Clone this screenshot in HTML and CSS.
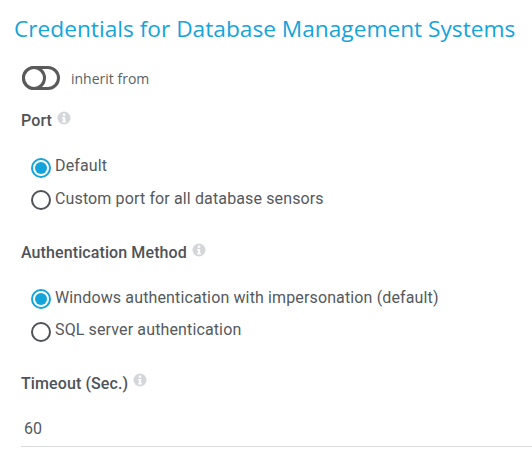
FILE: index.html
```html
<!DOCTYPE html>
<html lang="en">
<head>
<meta charset="utf-8">
<title>Credentials</title>
<link rel="stylesheet" href="styles.css">
</head>
<body>
<h1 class="title">Credentials for Database Management Systems</h1>
<div class="inherit">
  <span class="toggle"><span class="knob"></span></span>
  <span class="inherit-label">inherit from</span>
</div>
<section class="group group-port">
  <div class="label">Port <svg class="info" viewBox="0 0 14 14"><circle cx="7" cy="7" r="6.5" fill="#d4d7da"/><rect x="5.8" y="2.6" width="2.4" height="2.2" fill="#fff"/><path d="M5 6h3.2v4.2H9v1.2H5v-1.2h.9V7.2H5z" fill="#fff"/></svg></div>
  <div class="options">
    <div class="option"><span class="radio on"></span><span class="opt-text">Default</span></div>
    <div class="option"><span class="radio"></span><span class="opt-text">Custom port for all database sensors</span></div>
  </div>
</section>
<section class="group group-auth">
  <div class="label">Authentication Method <svg class="info" viewBox="0 0 14 14"><circle cx="7" cy="7" r="6.5" fill="#d4d7da"/><rect x="5.8" y="2.6" width="2.4" height="2.2" fill="#fff"/><path d="M5 6h3.2v4.2H9v1.2H5v-1.2h.9V7.2H5z" fill="#fff"/></svg></div>
  <div class="options">
    <div class="option"><span class="radio on"></span><span class="opt-text">Windows authentication with impersonation (default)</span></div>
    <div class="option"><span class="radio"></span><span class="opt-text">SQL server authentication</span></div>
  </div>
</section>
<section class="group group-timeout">
  <div class="label">Timeout (Sec.) <svg class="info" viewBox="0 0 14 14"><circle cx="7" cy="7" r="6.5" fill="#d4d7da"/><rect x="5.8" y="2.6" width="2.4" height="2.2" fill="#fff"/><path d="M5 6h3.2v4.2H9v1.2H5v-1.2h.9V7.2H5z" fill="#fff"/></svg></div>
  <div class="field">60</div>
</section>
</body>
</html>
```
FILE: styles.css
```css
html, body { margin: 0; padding: 0; background: #fff; }
body {
  width: 532px; height: 460px; overflow: hidden;
  font-family: Roboto, sans-serif; color: #55595d;
  padding-left: 14px; box-sizing: border-box;
}
.title {
  margin: 14px 0 0; font-family: "Open Sans", sans-serif;
  font-weight: 400; font-size: 22.7px; line-height: 29px;
  color: #14a4dc; white-space: nowrap;
}
.inherit { display: flex; align-items: center; margin: 23px 0 0 8px; height: 24px; }
.toggle {
  display: block; width: 38px; height: 24px; box-sizing: border-box;
  border: 3px solid #5a5a5a; border-radius: 12px; position: relative;
}
.knob {
  display: block; position: absolute; left: -3px; top: -3px;
  width: 24px; height: 24px; box-sizing: border-box;
  border: 3px solid #5a5a5a; border-radius: 50%; background: #fff;
}
.inherit-label { font-family: "Open Sans", sans-serif; font-size: 14px; margin-left: 11px; color: #5c5f63; }
.group { margin-left: 7px; }
.label { font-weight: 500; font-size: 16px; line-height: 20px; color: #4f5357; display: flex; align-items: flex-start; letter-spacing: .1px; }
.info { width: 14px; height: 14px; margin: 0 0 0 5px; }
.group-port { margin-top: 21px; }
.group-auth { margin-top: 21px; }
.group-timeout { margin-top: 22px; }
.group-timeout .info { margin-top: -1px; }
.options { margin-top: 25px; margin-left: 10px; }
.option { display: flex; align-items: flex-start; height: 33px; }
.group-auth .option { height: 32px; }
.radio {
  display: block; width: 20px; height: 20px; box-sizing: border-box;
  border: 2px solid #4f5357; border-radius: 50%; margin-top: 1px; flex: none; background: #fff;
}
.group-port .radio.on { margin-top: 2px; }
.group-auth .radio:not(.on) { margin-top: 2px; }
.radio.on { border-color: #14a4dc; position: relative; }
.radio.on::after {
  content: ""; position: absolute; left: 2px; top: 2px; width: 12px; height: 12px;
  border-radius: 50%; background: #14a4dc;
}
.opt-text { font-size: 16px; line-height: 20px; margin-left: 4px; letter-spacing: .13px; white-space: nowrap; }
.field {
  margin-top: 16px; height: 37px; line-height: 37px; font-size: 16px; padding-left: 3px;
  border-bottom: 1px solid #d8dadc; box-sizing: border-box; margin-right: -20px;
}
```
